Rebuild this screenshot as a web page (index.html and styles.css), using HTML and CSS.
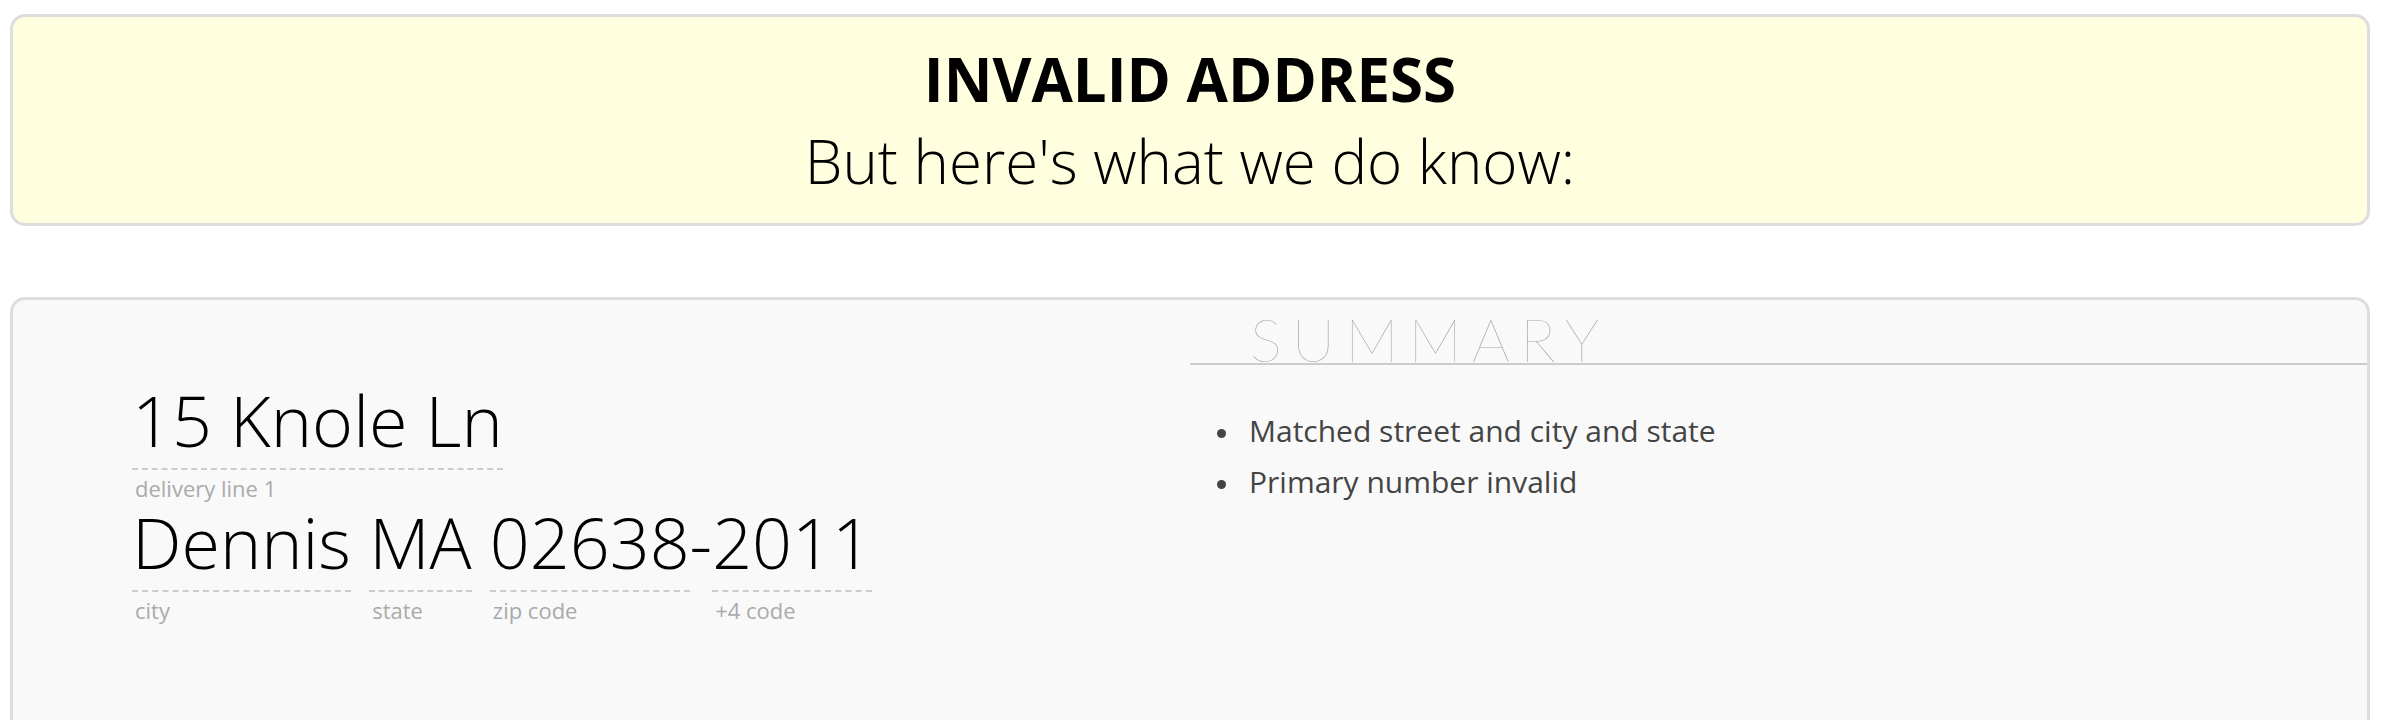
FILE: index.html
```html
<!DOCTYPE html>
<html lang="en">
<head>
<meta charset="utf-8">
<title>Invalid address</title>
<link rel="stylesheet" href="styles.css">
</head>
<body>
<div class="page">
  <div class="alert">
    <h1 class="alert-title">INVALID ADDRESS</h1>
    <p class="alert-sub">But here's what we do know:</p>
  </div>
  <div class="result">
    <div class="address">
      <div class="row"><div class="field"><span class="value">15 Knole Ln</span><div class="label">delivery line 1</div></div></div>
      <div class="row"><div class="field"><span class="value">Dennis</span><div class="label">city</div></div> <div class="field"><span class="value">MA</span><div class="label">state</div></div> <div class="field"><span class="value">02638</span><div class="label">zip code</div></div>-<div class="field"><span class="value">2011</span><div class="label">+4 code</div></div></div>
    </div>
    <div class="summary">
      <h2 class="summary-title">SUMMARY</h2>
      <ul class="summary-list">
        <li>Matched street and city and state</li>
        <li>Primary number invalid</li>
      </ul>
    </div>
  </div>
</div>
</body>
</html>
```

FILE: styles.css
```css
html, body {
  margin: 0;
  padding: 0;
  background: #ffffff;
}

.page {
  padding: 14px 14px 0 10px;
  font-family: "Open Sans", "Liberation Sans", sans-serif;
}

.alert {
  background: #ffffe0;
  border: 3px solid #dddddd;
  border-radius: 15px;
  text-align: center;
  padding: 21px 0;
  color: #000000;
}

.alert-title {
  margin: 0;
  font-size: 60px;
  font-weight: 700;
  line-height: normal;
}

.alert-sub {
  margin: 0;
  font-size: 60px;
  font-weight: 300;
  line-height: normal;
}

.result {
  margin-top: 71px;
  background: #f9f9f9;
  border: 3px solid #dddddd;
  border-radius: 15px;
  min-height: 500px;
  display: grid;
  grid-template-columns: minmax(0, 1fr) minmax(0, 1fr);
}

.address {
  padding: 80px 0 0 119px;
}

.row {
  white-space: nowrap;
  font-size: 70px;
  font-weight: 300;
  line-height: 80px;
  color: #000000;
}

.field {
  display: inline-block;
  vertical-align: top;
}

.value {
  display: inline-block;
  line-height: 70px;
  padding-bottom: 13px;
  border-bottom: 2px dashed #cccccc;
}

.label {
  margin-top: 5px;
  padding-left: 3px;
  font-size: 22px;
  font-weight: 400;
  line-height: 27px;
  color: #aaaaaa;
}

.summary-title {
  margin: 15px 0 0;
  padding-left: 60px;
  font-family: Lato, "Liberation Sans", sans-serif;
  font-size: 60px;
  font-weight: 100;
  line-height: 48px;
  letter-spacing: 10px;
  color: #aaaaaa;
  border-bottom: 2px solid #cccccc;
}

.summary-list {
  margin: 40px 0 0;
  padding-left: 59px;
  list-style: none;
  font-size: 30px;
  font-weight: 400;
  line-height: 51px;
  color: #444444;
}

.summary-list li::before {
  content: "";
  display: inline-block;
  width: 9px;
  height: 9px;
  border-radius: 50%;
  background: #444444;
  margin-left: -32px;
  margin-right: 23px;
  vertical-align: middle;
}
```
